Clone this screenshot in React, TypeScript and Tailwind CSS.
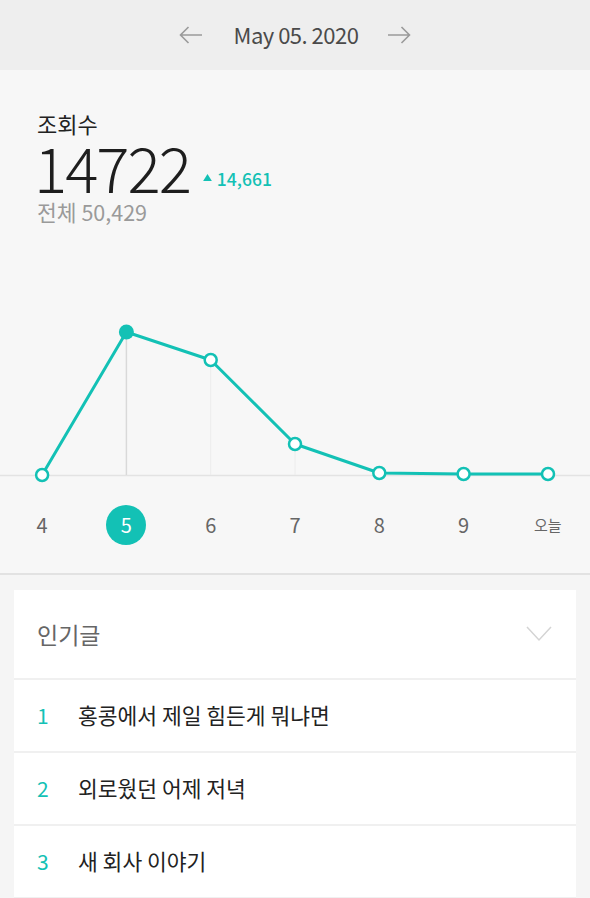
import React from "react";

const TEAL = "#13c1b5";
const xs = [42.1, 126.4, 210.7, 295, 379.3, 463.6, 548];
const OFF = 17;
const ys = [234, 91, 119, 203, 232, 233, 233].map((y) => y + OFF);

function Chart() {
  const pts = xs.map((x, i) => `${x},${ys[i]}`).join(" ");
  const base = 234 + OFF;
  return (
    <svg width="590" height={250 + OFF} viewBox={`0 0 590 ${250 + OFF}`} className="block">
      <line x1="0" y1={base + 0.5} x2="590" y2={base + 0.5} stroke="#e3e3e3" strokeWidth="1.5" />
      <line x1="126.4" y1={ys[1]} x2="126.4" y2={base} stroke="#d9d9d9" strokeWidth="1.5" />
      <line x1="210.7" y1={ys[2]} x2="210.7" y2={base} stroke="#ececec" strokeWidth="1" />
      <line x1="295" y1={ys[3]} x2="295" y2={base} stroke="#ececec" strokeWidth="1" />
      <polyline points={pts} fill="none" stroke={TEAL} strokeWidth="3" strokeLinejoin="round" />
      {xs.map((x, i) =>
        i === 1 ? (
          <circle key={i} cx={x} cy={ys[i]} r="7.5" fill={TEAL} />
        ) : (
          <circle key={i} cx={x} cy={ys[i]} r="6" fill="#ffffff" stroke={TEAL} strokeWidth="2.5" />
        )
      )}
    </svg>
  );
}

export default function App() {
  const labels = ["4", "5", "6", "7", "8", "9", "오늘"];
  const posts = ["홍콩에서 제일 힘든게 뭐냐면", "외로웠던 어제 저녁", "새 회사 이야기"];
  return (
    <div
      className="w-[590px] h-[898px] overflow-hidden bg-[#f5f5f5]"
      style={{ fontFamily: '"Noto Sans CJK KR", "Noto Sans", sans-serif' }}
    >
      <div className="h-[70px] bg-[#eeeeee] flex items-center justify-center">
        <svg width="24" height="18" viewBox="0 0 24 18" className="mr-[31px]">
          <path d="M23 9H1.5M9.5 1L1.5 9l8 8" fill="none" stroke="#9a9a9a" strokeWidth="1.6" />
        </svg>
        <span className="text-[22px] leading-none text-[#4a4a4a] tracking-[-0.5px] pb-[2px]">May 05. 2020</span>
        <svg width="24" height="18" viewBox="0 0 24 18" className="ml-[29px]">
          <path d="M1 9h21.5M14.5 1l8 8-8 8" fill="none" stroke="#9a9a9a" strokeWidth="1.6" />
        </svg>
      </div>
      <div className="bg-[#f7f7f7] border-b-2 border-[#e2e2e2]">
        <div className="pl-[37px] pt-[40px]">
          <div className="text-[22px] leading-[26px] text-[#222]">조회수</div>
          <div className="flex items-center h-[60px]">
            <span className="text-[62px] leading-[60px] font-light text-[#1e1e1e] tracking-[-2px] -ml-[3px]">14722</span>
            <span className="ml-[13px] mt-[26px] flex items-center text-[17.5px] font-medium leading-none" style={{ color: TEAL }}>
              <svg width="9" height="7" viewBox="0 0 10 8" className="mr-[5px] mb-[3px]">
                <path d="M5 0L10 8H0z" fill={TEAL} />
              </svg>
              14,661
            </span>
          </div>
          <div className="text-[21.5px] leading-[24px] text-[#9a9a9a] mt-[4px]">전체 50,429</div>
        </div>
        <Chart />
        <div className="grid grid-cols-7 h-[82px] items-center pb-[14px]">
          {labels.map((l, i) => (
            <div key={i} className="flex justify-center">
              {i === 1 ? (
                <span
                  className="w-[40px] h-[40px] rounded-full flex items-center justify-center text-white text-[20px]"
                  style={{ backgroundColor: TEAL }}
                >
                  {l}
                </span>
              ) : (
                <span className={i === 6 ? "text-[15px] text-[#666]" : "text-[20px] text-[#666]"}>{l}</span>
              )}
            </div>
          ))}
        </div>
      </div>
      <div className="px-[14px] pt-[15px]">
        <div className="bg-white">
          <div className="h-[90px] flex items-center justify-between pl-[23px] pr-[24px] border-b-2 border-[#f0f0f0]">
            <span className="text-[23px] text-[#666]">인기글</span>
            <svg width="26" height="16" viewBox="0 0 26 16">
              <path d="M1 1l12 13L25 1" fill="none" stroke="#d4d4d4" strokeWidth="1.5" />
            </svg>
          </div>
          {posts.map((p, i) => (
            <div key={i} className="h-[73px] flex items-center pl-[23px] border-b-2 border-[#f0f0f0]">
              <span className="w-[41px] text-[21px]" style={{ color: TEAL }}>{i + 1}</span>
              <span className="text-[21.5px] text-[#222]">{p}</span>
            </div>
          ))}
        </div>
      </div>
    </div>
  );
}
